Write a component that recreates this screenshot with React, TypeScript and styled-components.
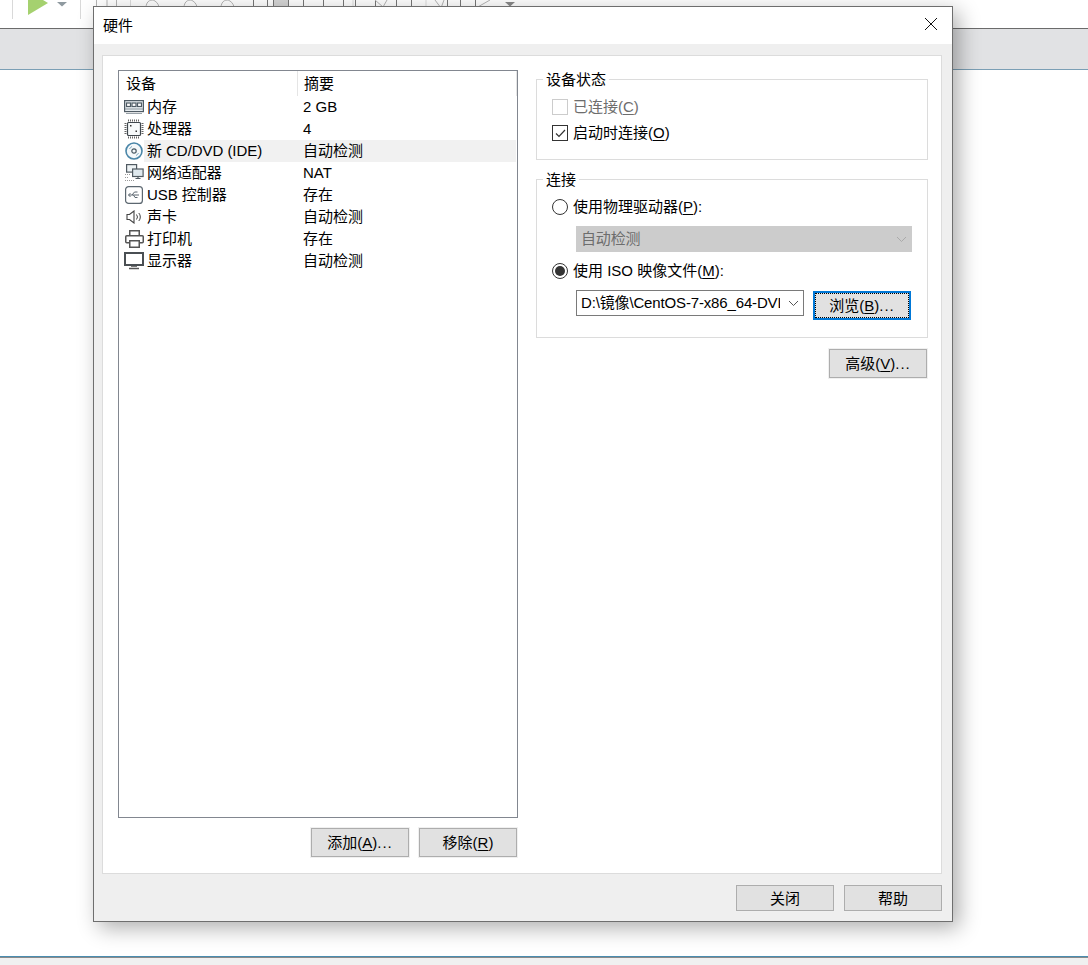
import React from "react";
import styled, { createGlobalStyle } from "styled-components";

const Global = createGlobalStyle`
  html, body { margin: 0; padding: 0; background: #fff; }
  body {
    font-family: "Liberation Sans", "Noto Sans CJK SC", sans-serif;
    font-size: 15px;
    color: #000;
  }
`;

const Page = styled.div`
  position: relative;
  width: 1088px;
  height: 965px;
  overflow: hidden;
  display: flex;
  flex-direction: column;
  background: #fff;
`;
const Toolbar = styled.div`
  height: 28px;
  display: flex;
  align-items: flex-start;
  padding-left: 12px;
  background: #fff;
  border-bottom: 1px solid #6b6b6b;
`;
const ToolSep = styled.div`
  width: 1px;
  height: 19px;
  background: #d9d9d9;
`;
const PlayWrap = styled.div`
  width: 67px;
  height: 19px;
  padding-left: 15px;
  box-sizing: border-box;
`;
const Band = styled.div`
  height: 40px;
  background: #e1e2e4;
  border-bottom: 1px solid #7b9fb5;
`;
const Blank = styled.div`
  flex: 1;
`;
const StatusBar = styled.div`
  height: 8px;
  background: #f0f0f0;
  border-top: 1px solid #4a8db0;
  box-shadow: inset 0 1px 0 #8a8a8a;
`;

const Dialog = styled.div`
  position: absolute;
  left: 93px;
  top: 6px;
  width: 860px;
  height: 916px;
  box-sizing: border-box;
  border: 1px solid #6e6e6e;
  display: flex;
  flex-direction: column;
  background: #efefef;
  box-shadow: 6px 6px 20px rgba(0, 0, 0, 0.32);
`;
const TitleBar = styled.div`
  height: 37px;
  flex: none;
  box-sizing: border-box;
  background: #fff;
  display: flex;
  align-items: center;
  justify-content: space-between;
  padding: 0 15px 3px 9px;
`;
const Body = styled.div`
  flex: 1;
  display: flex;
  flex-direction: column;
  padding: 11px 10px 10px 8px;
`;
const Panel = styled.div`
  width: 840px;
  height: 819px;
  box-sizing: border-box;
  background: #fff;
  border: 1px solid #dcdcdc;
  padding: 14px 14px 0 15px;
  display: flex;
  gap: 18px;
`;
const LeftCol = styled.div`
  width: 400px;
  flex: none;
  display: flex;
  flex-direction: column;
`;
const DeviceList = styled.div`
  height: 748px;
  box-sizing: border-box;
  border: 1px solid #828790;
  display: flex;
  flex-direction: column;
`;
const HeaderRow = styled.div`
  height: 25px;
  display: grid;
  grid-template-columns: 178px 1fr;
  align-items: center;
  border-right: 1px solid #e5e5e5;
`;
const HeaderCell = styled.div<{ $divider?: boolean }>`
  height: 25px;
  line-height: 26px;
  padding-left: ${(p) => (p.$divider ? "6px" : "7px")};
  border-left: ${(p) => (p.$divider ? "1px solid #e5e5e5" : "none")};
`;
const Row = styled.div`
  height: 22px;
  display: grid;
  grid-template-columns: 178px 1fr;
  align-items: center;
`;
const NameCell = styled.div`
  height: 22px;
  display: flex;
  align-items: center;
  padding-left: 5px;
`;
const IconBox = styled.span`
  width: 20px;
  height: 22px;
  flex: none;
  display: flex;
  align-items: center;
  justify-content: center;
`;
const Label = styled.span<{ $selected?: boolean }>`
  flex: 1;
  height: 22px;
  line-height: 22px;
  padding-left: 3px;
  white-space: pre;
  letter-spacing: -0.05px;
  background: ${(p) => (p.$selected ? "#f1f1f1" : "transparent")};
`;
const SummaryCell = styled.div<{ $selected?: boolean }>`
  height: 22px;
  line-height: 22px;
  padding-left: 6px;
  margin-right: 1px;
  background: ${(p) => (p.$selected ? "#f1f1f1" : "transparent")};
`;
const ListActions = styled.div`
  display: flex;
  justify-content: flex-end;
  gap: 10px;
  margin-top: 10px;
  padding-right: 1px;
`;
const Button = styled.button<{ $focused?: boolean; $h?: number }>`
  width: 98px;
  height: ${(p) => p.$h ?? 29}px;
  flex: none;
  box-sizing: border-box;
  padding: 0 0 2px;
  background: #e1e1e1;
  border: 1px solid #adadad;
  outline: 1px solid #f0f0f0;
  font-family: inherit;
  font-size: 15px;
  color: #000;
  ${(p) =>
    p.$focused &&
    `
    border: 2px solid #0078d7;
    outline: 1px dotted #000;
    outline-offset: -3px;
    margin-top: 1px;
  `}
`;
const Key = styled.span`
  text-decoration: underline;
  text-underline-offset: 2px;
`;
const Dots = styled.span`
  letter-spacing: 1px;
`;
const RightCol = styled.div`
  width: 392px;
  flex: none;
  padding-top: 9px;
  display: flex;
  flex-direction: column;
`;
const Group = styled.div<{ $h: number }>`
  position: relative;
  height: ${(p) => p.$h}px;
  box-sizing: border-box;
  border: 1px solid #dcdcdc;
  padding: 0 15px;
  margin-bottom: 19px;
  display: flex;
  flex-direction: column;
`;
const GroupTitle = styled.span`
  position: absolute;
  top: -11px;
  left: 6px;
  padding: 0 3px;
  height: 20px;
  line-height: 21px;
  background: #fff;
`;
const OptionRow = styled.div<{ $disabled?: boolean; $top: number }>`
  height: 22px;
  margin-top: ${(p) => p.$top}px;
  display: flex;
  align-items: center;
  gap: 5px;
  white-space: pre;
  color: ${(p) => (p.$disabled ? "#6d6d6d" : "#000")};
`;
const OptionText = styled.span`
  margin-top: -3px;
`;
const CheckBox = styled.span<{ $disabled?: boolean }>`
  width: 16px;
  height: 16px;
  flex: none;
  box-sizing: border-box;
  border: 1px solid ${(p) => (p.$disabled ? "#cccccc" : "#333333")};
  display: flex;
  align-items: center;
  justify-content: center;
`;
const Radio = styled.span<{ $on?: boolean }>`
  width: 16px;
  height: 16px;
  flex: none;
  box-sizing: border-box;
  border-radius: 50%;
  border: 1px solid #333;
  display: flex;
  align-items: center;
  justify-content: center;
  &::after {
    content: "";
    width: 10px;
    height: 10px;
    border-radius: 50%;
    background: ${(p) => (p.$on ? "#333" : "transparent")};
  }
`;
const Select = styled.div<{ $disabled?: boolean; $w: number }>`
  width: ${(p) => p.$w}px;
  height: 26px;
  flex: none;
  box-sizing: border-box;
  padding: 0 4px;
  display: flex;
  align-items: center;
  justify-content: space-between;
  overflow: hidden;
  white-space: pre;
  background: ${(p) => (p.$disabled ? "#cccccc" : "#fff")};
  border: 1px solid ${(p) => (p.$disabled ? "#cccccc" : "#7a7a7a")};
  color: ${(p) => (p.$disabled ? "#6d6d6d" : "#000")};
`;
const SelectText = styled.span`
  width: 199px;
  margin-top: -4px;
  overflow: hidden;
  letter-spacing: -0.15px;
`;
const IndentRow = styled.div<{ $top: number }>`
  margin-top: ${(p) => p.$top}px;
  padding-left: 24px;
  display: flex;
  align-items: flex-start;
  gap: 9px;
`;
const Advanced = styled.div`
  display: flex;
  justify-content: flex-end;
  margin-top: -8px;
  padding-right: 1px;
`;
const DialogFooter = styled.div`
  display: flex;
  justify-content: flex-end;
  gap: 10px;
  margin-top: 11px;
`;

const Chevron = ({ color }: { color: string }) => (
  <svg width="11" height="7" viewBox="0 0 11 7" fill="none">
    <path d="M1 1l4.5 4.5L10 1" stroke={color} strokeWidth="1" />
  </svg>
);

// what shows of the main window's toolbar above the dialog
const ToolbarFragments = () => (
  <svg width="440" height="8" viewBox="0 0 440 8" fill="none" stroke="#b5b5b5">
    <rect x="15.500" y="-4" width="20" height="12" />
    <path d="M26 -4v12" />
    <path d="M49.500 -2v10M272 -2v10M345 -2v10" stroke="#dddddd" />
    <path d="M65 8c0-8 6-9 9-7s4 5 4 7M103 8c0-8 6-9 9-7s4 5 4 7M140 8c0-8 6-9 9-7s4 5 4 7" />
    <path d="M172.500 0v8M186.500 0v8M192.500 0v8M207.500 0v8M222.500 0v8M242.500 0v8M262.500 0v8M274.500 0v8M294.500 0v8M315.500 0v8M330.500 0v8M366.500 0v8M379.500 0v8M394.500 0v8" stroke="#777777" />
    <rect x="193" y="-1" width="14" height="9" fill="#d5d5d5" stroke="none" />
    <path d="M294 0l8 7 4-7M354 0l6 8 3-8M395 8l14-8" />
    <path d="M424 2h10l-5 4.500z" fill="#8a8a8a" stroke="none" />
  </svg>
);

const MemoryIcon = () => (
  <svg width="20" height="14" viewBox="0 0 20 14" fill="none" stroke="#4f5b64" strokeWidth="1.200">
    <rect x="0.600" y="0.600" width="18.800" height="11" fill="#e6ecef" />
    <rect x="2.500" y="3" width="4" height="3.500" fill="#fff" />
    <rect x="8" y="3" width="4" height="3.500" fill="#fff" />
    <rect x="13.500" y="3" width="4" height="3.500" fill="#fff" />
    <path d="M1 9h18" stroke="#8a949c" strokeWidth="1" />
    <path d="M2 13.500h16" stroke="#98a1a8" strokeWidth="1" />
  </svg>
);
const CpuIcon = () => (
  <svg width="20" height="20" viewBox="0 0 20 20" fill="none" stroke="#555">
    <rect x="3.500" y="3.500" width="13" height="13" rx="1" fill="#f7fafb" stroke="#3f474d" strokeWidth="1.200" />
    <path d="M4 1.500h12M4 18.500h12M1.500 4v12M18.500 4v12" stroke="#666" strokeDasharray="1 1" strokeWidth="2" />
    <rect x="6" y="6" width="1.500" height="1.500" fill="#333" stroke="none" />
    <rect x="11.500" y="11.500" width="1.500" height="1.500" fill="#333" stroke="none" />
  </svg>
);
const DiscIcon = () => (
  <svg width="18" height="18" viewBox="0 0 18 18" fill="none">
    <circle cx="9" cy="9" r="8" fill="#f4f8fa" stroke="#4a86a8" strokeWidth="1.600" />
    <circle cx="9" cy="9" r="2.200" stroke="#4a5a64" strokeWidth="1.200" />
    <path d="M4.500 7a4.800 4.800 0 0 1 2.500-2.500M13.500 11a4.800 4.800 0 0 1-2.500 2.500" stroke="#7fa8bd" />
  </svg>
);
const NetworkIcon = () => (
  <svg width="20" height="18" viewBox="0 0 20 18" fill="none" stroke="#505a62" strokeWidth="1.200">
    <rect x="2.600" y="0.600" width="10" height="7.500" fill="#eef3f5" />
    <rect x="8.600" y="5" width="10.500" height="7.500" fill="#dfe9ee" />
    <path d="M11.500 14.500h5M14 12.500v2" />
    <path d="M1 10.500h6M1 13.500h4M1 16.500h9" stroke="#999" strokeWidth="1" strokeDasharray="1 1" />
  </svg>
);
const UsbIcon = () => (
  <svg width="18" height="18" viewBox="0 0 18 18" fill="none" stroke="#5c6770" strokeWidth="1.200">
    <rect x="0.600" y="0.600" width="16.800" height="16.800" rx="3" fill="#fff" />
    <path d="M3.500 9h10.500M3.500 9l2-2M3.500 9l2 2M7 9l2.500-3h3M8.500 9l1.500 2.500h2.500" strokeWidth="1" />
  </svg>
);
const SoundIcon = () => (
  <svg width="16" height="14" viewBox="0 0 16 14" fill="none" stroke="#444" strokeWidth="1.100">
    <path d="M1 4.500v5h2.500L8 13V1L3.500 4.500H1z" fill="#fff" />
    <path d="M10.500 4.500a4 4 0 0 1 0 5M12.800 3a6 6 0 0 1 0 8" strokeWidth="1" />
  </svg>
);
const PrinterIcon = () => (
  <svg width="19" height="18" viewBox="0 0 19 18" fill="none" stroke="#555" strokeWidth="1.500">
    <rect x="4.750" y="0.750" width="9.500" height="5" fill="#fff" />
    <rect x="0.750" y="5.750" width="17.500" height="7" rx="1" fill="#fff" />
    <rect x="4.750" y="10.750" width="9.500" height="6.500" fill="#fff" />
  </svg>
);
const MonitorIcon = () => (
  <svg width="20" height="18" viewBox="0 0 20 18" fill="none" stroke="#4a4f53">
    <rect x="1" y="1" width="18" height="12" fill="#fff" strokeWidth="2" />
    <path d="M7 14.500h6" stroke="#777" />
    <path d="M5 16.500h10" stroke="#555" strokeWidth="1.500" />
  </svg>
);

const devices = [
  { icon: <MemoryIcon />, name: "内存", value: "2 GB" },
  { icon: <CpuIcon />, name: "处理器", value: "4" },
  { icon: <DiscIcon />, name: "新 CD/DVD (IDE)", value: "自动检测", selected: true },
  { icon: <NetworkIcon />, name: "网络适配器", value: "NAT" },
  { icon: <UsbIcon />, name: "USB 控制器", value: "存在" },
  { icon: <SoundIcon />, name: "声卡", value: "自动检测" },
  { icon: <PrinterIcon />, name: "打印机", value: "存在" },
  { icon: <MonitorIcon />, name: "显示器", value: "自动检测" },
];

export default function App() {
  return (
    <Page>
      <Global />
      <Toolbar>
        <ToolSep />
        <PlayWrap>
          <svg width="40" height="16" viewBox="0 0 40 16">
            <path d="M0 0v15L20 3 15 0z" fill="#a5d16f" />
            <path d="M29 2h10l-5 4.500z" fill="#8f9aa0" />
          </svg>
        </PlayWrap>
        <ToolSep />
        <ToolbarFragments />
      </Toolbar>
      <Band />
      <Blank />
      <StatusBar />

      <Dialog>
        <TitleBar>
          硬件
          <svg width="12" height="12" viewBox="0 0 12 12" fill="none" stroke="#111">
            <path d="M0 0l12 12M12 0L0 12" />
          </svg>
        </TitleBar>
        <Body>
          <Panel>
            <LeftCol>
              <DeviceList>
                <HeaderRow>
                  <HeaderCell>设备</HeaderCell>
                  <HeaderCell $divider>摘要</HeaderCell>
                </HeaderRow>
                {devices.map((d) => (
                  <Row key={d.name}>
                    <NameCell>
                      <IconBox>{d.icon}</IconBox>
                      <Label $selected={d.selected}>{d.name}</Label>
                    </NameCell>
                    <SummaryCell $selected={d.selected}>{d.value}</SummaryCell>
                  </Row>
                ))}
              </DeviceList>
              <ListActions>
                <Button>
                  添加(<Key>A</Key>)<Dots>...</Dots>
                </Button>
                <Button>
                  移除(<Key>R</Key>)
                </Button>
              </ListActions>
            </LeftCol>
            <RightCol>
              <Group $h={81}>
                <GroupTitle>设备状态</GroupTitle>
                <OptionRow $disabled $top={16}>
                  <CheckBox $disabled />
                  <OptionText>
                    已连接(<Key>C</Key>)
                  </OptionText>
                </OptionRow>
                <OptionRow $top={4}>
                  <CheckBox>
                    <svg width="11" height="9" viewBox="0 0 11 9" fill="none" stroke="#333" strokeWidth="1.200">
                      <path d="M1 4.500l3 3L10 1" />
                    </svg>
                  </CheckBox>
                  <OptionText>
                    启动时连接(<Key>O</Key>)
                  </OptionText>
                </OptionRow>
              </Group>
              <Group $h={159}>
                <GroupTitle>连接</GroupTitle>
                <OptionRow $top={16}>
                  <Radio />
                  <OptionText>
                    使用物理驱动器(<Key>P</Key>):
                  </OptionText>
                </OptionRow>
                <IndentRow $top={8}>
                  <Select $disabled $w={336}>
                    <SelectText>自动检测</SelectText>
                    <Chevron color="#aaaaaa" />
                  </Select>
                </IndentRow>
                <OptionRow $top={8}>
                  <Radio $on />
                  <OptionText>
                    使用 ISO 映像文件(<Key>M</Key>):
                  </OptionText>
                </OptionRow>
                <IndentRow $top={8}>
                  <Select $w={228}>
                    <SelectText>D:\镜像\CentOS-7-x86_64-DVD</SelectText>
                    <Chevron color="#555555" />
                  </Select>
                  <Button $focused>
                    浏览(<Key>B</Key>)<Dots>...</Dots>
                  </Button>
                </IndentRow>
              </Group>
              <Advanced>
                <Button>
                  高级(<Key>V</Key>)<Dots>...</Dots>
                </Button>
              </Advanced>
            </RightCol>
          </Panel>
          <DialogFooter>
            <Button $h={26}>关闭</Button>
            <Button $h={26}>帮助</Button>
          </DialogFooter>
        </Body>
      </Dialog>
    </Page>
  );
}
